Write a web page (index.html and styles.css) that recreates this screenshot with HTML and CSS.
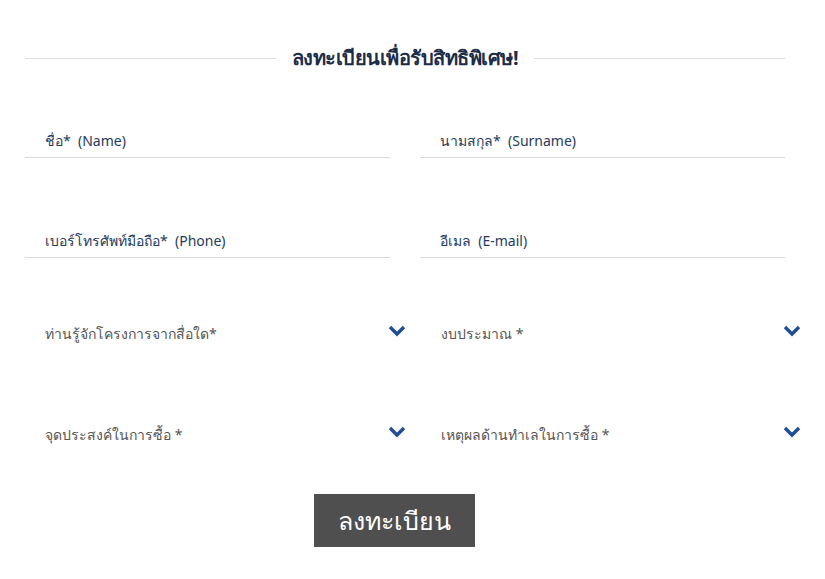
FILE: index.html
```html
<!DOCTYPE html>
<html lang="th">

<head>
    <meta charset="utf-8">
    <link rel="stylesheet" href="styles.css">
</head>

<body>
    <div class="container">
        <div class="title-row">
            <span class="line"></span>
            <h2>ลงทะเบียนเพื่อรับสิทธิพิเศษ!</h2>
            <span class="line"></span>
        </div>

        <form class="form-grid">
            <div class="field">
                <input type="text" placeholder="ชื่อ*  (Name)">
            </div>
            <div class="field">
                <input type="text" placeholder="นามสกุล*  (Surname)">
            </div>
            <div class="field">
                <input type="text" placeholder="เบอร์โทรศัพท์มือถือ*  (Phone)">
            </div>
            <div class="field">
                <input type="text" placeholder="อีเมล  (E-mail)">
            </div>
            <div class="select-field">
                <span class="select-text">ท่านรู้จักโครงการจากสื่อใด*</span>
                <svg class="chevron" viewBox="0 0 18 12" width="18" height="12">
                    <path d="M2 2 L9 9 L16 2" fill="none" stroke="#1f4e96" stroke-width="3.4" />
                </svg>
            </div>
            <div class="select-field">
                <span class="select-text">งบประมาณ  *</span>
                <svg class="chevron" viewBox="0 0 18 12" width="18" height="12">
                    <path d="M2 2 L9 9 L16 2" fill="none" stroke="#1f4e96" stroke-width="3.4" />
                </svg>
            </div>
            <div class="select-field last">
                <span class="select-text">จุดประสงค์ในการซื้อ  *</span>
                <svg class="chevron" viewBox="0 0 18 12" width="18" height="12">
                    <path d="M2 2 L9 9 L16 2" fill="none" stroke="#1f4e96" stroke-width="3.4" />
                </svg>
            </div>
            <div class="select-field last">
                <span class="select-text">เหตุผลด้านทำเลในการซื้อ  *</span>
                <svg class="chevron" viewBox="0 0 18 12" width="18" height="12">
                    <path d="M2 2 L9 9 L16 2" fill="none" stroke="#1f4e96" stroke-width="3.4" />
                </svg>
            </div>
        </form>

        <div class="submit-row">
            <button type="button" class="submit">ลงทะเบียน</button>
        </div>
    </div>
</body>

</html>
```

FILE: styles.css
```css
body {
    margin: 0;
    padding: 0;
    background: #fff;
    font-family: "Noto Sans", "DejaVu Sans", sans-serif;
}

.container {
    padding: 42px 40px 0 25px;
}

.title-row {
    display: flex;
    align-items: center;
    width: 760px;
    gap: 16px;
}

.line {
    flex: 1;
    height: 1px;
    background: #dcdcdc;
}

.title-row h2 {
    margin: 0;
    font-size: 20px;
    font-weight: bold;
    color: #1c2d4a;
    letter-spacing: -0.5px;
}

.form-grid {
    display: grid;
    grid-template-columns: 365px 365px;
    column-gap: 30px;
    margin-top: 50px;
}

.field {
    height: 100px;
}

.field input {
    width: 100%;
    box-sizing: border-box;
    border: none;
    border-bottom: 1px solid #d8d8de;
    padding: 0 20px;
    height: 34px;
    font-family: inherit;
    font-size: 14px;
    outline: none;
    background: transparent;
}

.field input::placeholder {
    color: #253a5c;
}

.select-field {
    height: 101px;
    display: flex;
    align-items: flex-start;
    justify-content: space-between;
    padding-left: 20px;
    margin-right: -16px;
}

.select-field:nth-child(even) {
    padding-left: 21px;
}

.select-field.last {
    height: 69px;
}

.select-text {
    font-size: 14px;
    line-height: 20px;
    color: #555;
}

.chevron {
    margin-top: 1px;
}

.submit-row {
    display: flex;
    justify-content: center;
    width: 739px;
}

.submit {
    background: #4f4f4f;
    color: #fff;
    border: none;
    width: 161px;
    height: 53px;
    font-family: inherit;
    font-size: 25px;
    padding: 0;
}
```
